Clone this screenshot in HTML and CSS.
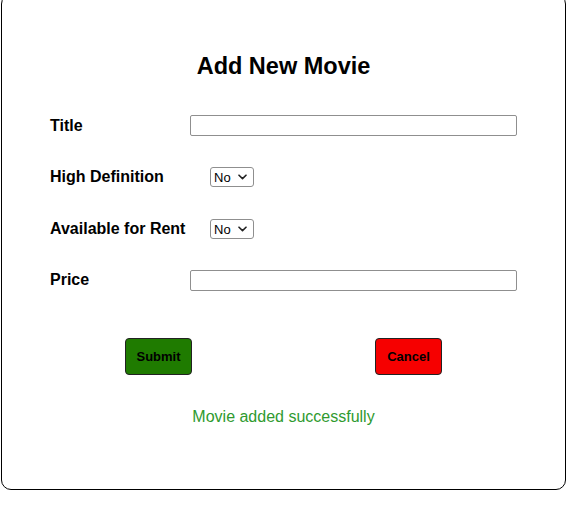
FILE: index.html
```html
<!DOCTYPE html>
<html lang="en">
<head>
<meta charset="utf-8">
<title>Add New Movie</title>
<link rel="stylesheet" href="styles.css">
</head>
<body>
<div class="card">
  <h2 class="heading">Add New Movie</h2>
  <form class="form">
    <div class="row">
      <label class="label" for="title">Title</label>
      <input class="text-input" id="title" type="text">
    </div>
    <div class="row">
      <label class="label" for="hd">High Definition</label>
      <span class="select-wrap">
        <select class="select" id="hd"><option>No</option><option>Yes</option></select>
        <svg class="chevron" width="9" height="6" viewBox="0 0 9 6"><path d="M1 1.2 L4.5 4.6 L8 1.2" fill="none" stroke="#222" stroke-width="1.6" stroke-linecap="round" stroke-linejoin="round"/></svg>
      </span>
    </div>
    <div class="row">
      <label class="label" for="rent">Available for Rent</label>
      <span class="select-wrap">
        <select class="select" id="rent"><option>No</option><option>Yes</option></select>
        <svg class="chevron" width="9" height="6" viewBox="0 0 9 6"><path d="M1 1.2 L4.5 4.6 L8 1.2" fill="none" stroke="#222" stroke-width="1.6" stroke-linecap="round" stroke-linejoin="round"/></svg>
      </span>
    </div>
    <div class="row">
      <label class="label" for="price">Price</label>
      <input class="text-input" id="price" type="text">
    </div>
    <div class="actions">
      <button type="button" class="btn btn-submit">Submit</button>
      <button type="button" class="btn btn-cancel">Cancel</button>
    </div>
  </form>
  <p class="message">Movie added successfully</p>
</div>
</body>
</html>
```
FILE: styles.css
```css
html, body {
  margin: 0;
  padding: 0;
  background: #fff;
}
body {
  font-family: "Liberation Sans", Arial, sans-serif;
  color: #000;
}
.card {
  box-sizing: border-box;
  width: 565px;
  height: 496px;
  margin: -6px 0 0 1px;
  border: 1px solid #000;
  border-radius: 10px;
  padding: 57px 48px 0 48px;
}
.heading {
  margin: 0;
  font-size: 23.5px;
  line-height: 28px;
  font-weight: bold;
  text-align: center;
}
.form {
  margin: 35px 0 0 0;
  display: flex;
  flex-direction: column;
  gap: 30.5px;
}
.row {
  display: grid;
  grid-template-columns: 140px auto;
  align-items: center;
  height: 21px;
}
.label {
  font-size: 16px;
  font-weight: bold;
  line-height: 19px;
  margin-top: -1px;
}
.text-input {
  box-sizing: border-box;
  width: 327px;
  height: 21px;
  border: 1px solid #8f8f8f;
  border-radius: 2px;
  padding: 0 4px;
  font-size: 13px;
  font-family: inherit;
  margin: 0;
}
.select-wrap {
  position: relative;
  box-sizing: border-box;
  margin-left: 20px;
  width: 44px;
  height: 20px;
  border: 1px solid #8f8f8f;
  border-radius: 3px;
  display: block;
}
.select {
  appearance: none;
  -webkit-appearance: none;
  border: none;
  background: transparent;
  width: 100%;
  height: 100%;
  margin: 0;
  padding: 0 0 0 3px;
  font-family: inherit;
  font-size: 13px;
  color: #000;
  outline: none;
}
.chevron {
  position: absolute;
  right: 6px;
  top: 6px;
  pointer-events: none;
}
.actions {
  display: flex;
  justify-content: center;
  gap: 183px;
  margin-top: 16.5px;
}
.btn {
  box-sizing: border-box;
  width: 67px;
  height: 37px;
  border: 1px solid #222;
  border-radius: 4px;
  font-family: inherit;
  font-size: 13px;
  font-weight: bold;
  color: #000;
  padding: 0;
  margin: 0;
}
.btn-submit {
  background: #1f7b00;
}
.btn-cancel {
  background: #f60000;
}
.message {
  margin: 32px 0 0 0;
  text-align: center;
  font-size: 16px;
  line-height: 19px;
  color: #2f9a2f;
}
```
